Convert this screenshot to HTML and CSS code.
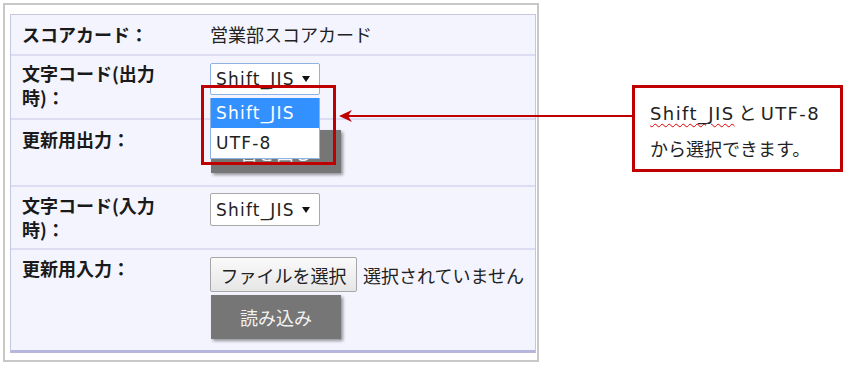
FILE: index.html
```html
<!DOCTYPE html>
<html lang="ja">
<head>
<meta charset="utf-8">
<title>スコアカード</title>
<link rel="stylesheet" href="styles.css">
</head>
<body>
<div class="page">
  <div class="frame">
    <div class="card">
      <div class="row r1">
        <div class="label">スコアカード：</div>
        <div class="value">営業部スコアカード</div>
      </div>
      <div class="row r2">
        <div class="label">文字コード(出力<br>時)：</div>
        <div class="value">
          <div class="select open">
            <span class="latin">Shift_JIS</span>
            <svg class="caret" width="8" height="6" viewBox="0 0 8 6"><path d="M0 0H8L4 6Z" fill="#111"/></svg>
          </div>
        </div>
      </div>
      <div class="row r3">
        <div class="label">更新用出力：</div>
        <div class="value">
          <div class="dark-btn btn-out">書き出し</div>
        </div>
      </div>
      <div class="row r4">
        <div class="label">文字コード(入力<br>時)：</div>
        <div class="value">
          <div class="select">
            <span class="latin">Shift_JIS</span>
            <svg class="caret" width="8" height="6" viewBox="0 0 8 6"><path d="M0 0H8L4 6Z" fill="#111"/></svg>
          </div>
        </div>
      </div>
      <div class="row r5">
        <div class="label">更新用入力：</div>
        <div class="value stack">
          <div class="file-line">
            <div class="file-btn">ファイルを選択</div>
            <span class="file-name">選択されていません</span>
          </div>
          <div class="dark-btn btn-in">読み込み</div>
        </div>
      </div>
    </div>
  </div>

  <ul class="dropdown">
    <li class="opt selected"><span class="latin">Shift_JIS</span></li>
    <li class="opt"><span class="latin">UTF-8</span></li>
  </ul>
  <div class="mark"></div>
  <svg class="arrow" width="300" height="14" viewBox="0 0 300 14">
    <line x1="10" y1="7" x2="300" y2="7" stroke="#c00000" stroke-width="2"/>
    <path d="M1 7L14 1L10 7L14 13Z" fill="#c00000"/>
  </svg>
  <div class="callout">
    <div><span class="latin wavy">Shift_JIS</span> と <span class="latin">UTF-8</span></div>
    <div>から選択できます。</div>
  </div>
</div>
</body>
</html>
```

FILE: styles.css
```css
body {
  margin: 0;
  background: #fff;
  font-family: "Noto Sans CJK JP", sans-serif;
  color: #222;
}

.page {
  position: relative;
  width: 846px;
  height: 366px;
}

.frame {
  margin: 3px 0 0 3px;
  width: 536px;
  box-sizing: border-box;
  border: 2px solid #c8c8c8;
  padding: 9px 1px 7px 5px;
}

.card {
  background: #f4f4fe;
  border: 1px solid #c6c6de;
  border-bottom: 3px solid #b6b6dc;
  display: grid;
  grid-template-rows: 39px 64px 67px 63px 102px;
}

.row {
  display: flex;
  align-items: flex-start;
  box-sizing: border-box;
  border-top: 2px solid #dcdcf2;
}
.row.r1 { border-top: 0; padding-top: 7px; }
.row.r2 { padding-top: 5px; }
.row.r3 { padding-top: 7px; }
.row.r4 { padding-top: 6px; }
.row.r5 { padding-top: 6px; }

.label {
  width: 188px;
  padding-left: 11px;
  font-size: 18px;
  line-height: 24px;
  font-weight: bold;
  color: #1a1a1a;
}

.value {
  font-size: 18px;
  line-height: 24px;
  color: #222;
}

.latin {
  font-family: "DejaVu Sans", sans-serif;
  letter-spacing: 1.2px;
}

.select {
  width: 110px;
  height: 32px;
  box-sizing: border-box;
  border: 1px solid #a9a9a9;
  border-radius: 2px;
  background: #fff;
  display: flex;
  align-items: center;
  justify-content: space-between;
  padding: 0 9px 0 5px;
  font-size: 17px;
  color: #222;
}
.select.open {
  margin-top: 2px;
  border-color: #8fb2e4;
}
.r4 .select { height: 33px; }

.dark-btn {
  width: 130px;
  height: 44px;
  margin-left: 1px;
  background: #767676;
  color: #f2f2f2;
  font-size: 18px;
  display: flex;
  align-items: center;
  justify-content: center;
  box-shadow: 2px 2px 3px rgba(0, 0, 0, 0.4);
}
.btn-out { height: 43px; margin-top: 3px; }
.btn-in { margin-top: 3px; }

.stack {
  display: flex;
  flex-direction: column;
}
.file-line {
  display: flex;
  align-items: center;
  gap: 6px;
  margin-top: 1px;
}
.file-btn {
  width: 147px;
  height: 35px;
  box-sizing: border-box;
  border: 1px solid #a6a6a6;
  border-radius: 2px;
  background: linear-gradient(#fafafa, #e6e6e6);
  display: flex;
  align-items: center;
  justify-content: center;
  font-size: 18px;
  color: #222;
}

.dropdown {
  position: absolute;
  left: 210px;
  top: 95px;
  width: 110px;
  margin: 0;
  padding: 0;
  list-style: none;
  box-sizing: border-box;
  border: 1px solid #8fb2e4;
  border-top: 0;
  background: #fff;
}
.opt {
  height: 30px;
  display: flex;
  align-items: center;
  padding-left: 5px;
  font-size: 17px;
  color: #222;
}
.opt.selected {
  background: #3390ff;
  color: #fff;
}

.mark {
  position: absolute;
  left: 201px;
  top: 82px;
  width: 135px;
  height: 80px;
  box-sizing: border-box;
  border: 3px solid #c00000;
}

.arrow {
  position: absolute;
  left: 338px;
  top: 106px;
}

.callout {
  position: absolute;
  left: 632px;
  top: 82px;
  width: 211px;
  height: 87px;
  box-sizing: border-box;
  border: 3px solid #c00000;
  background: #fff;
  padding: 7px 0 0 15px;
  font-size: 18px;
  line-height: 35px;
  color: #222;
}
.callout .latin { letter-spacing: 1.4px; }
.wavy {
  text-decoration: underline wavy #e00000;
  text-decoration-thickness: 1px;
  text-underline-offset: 3px;
}
```
